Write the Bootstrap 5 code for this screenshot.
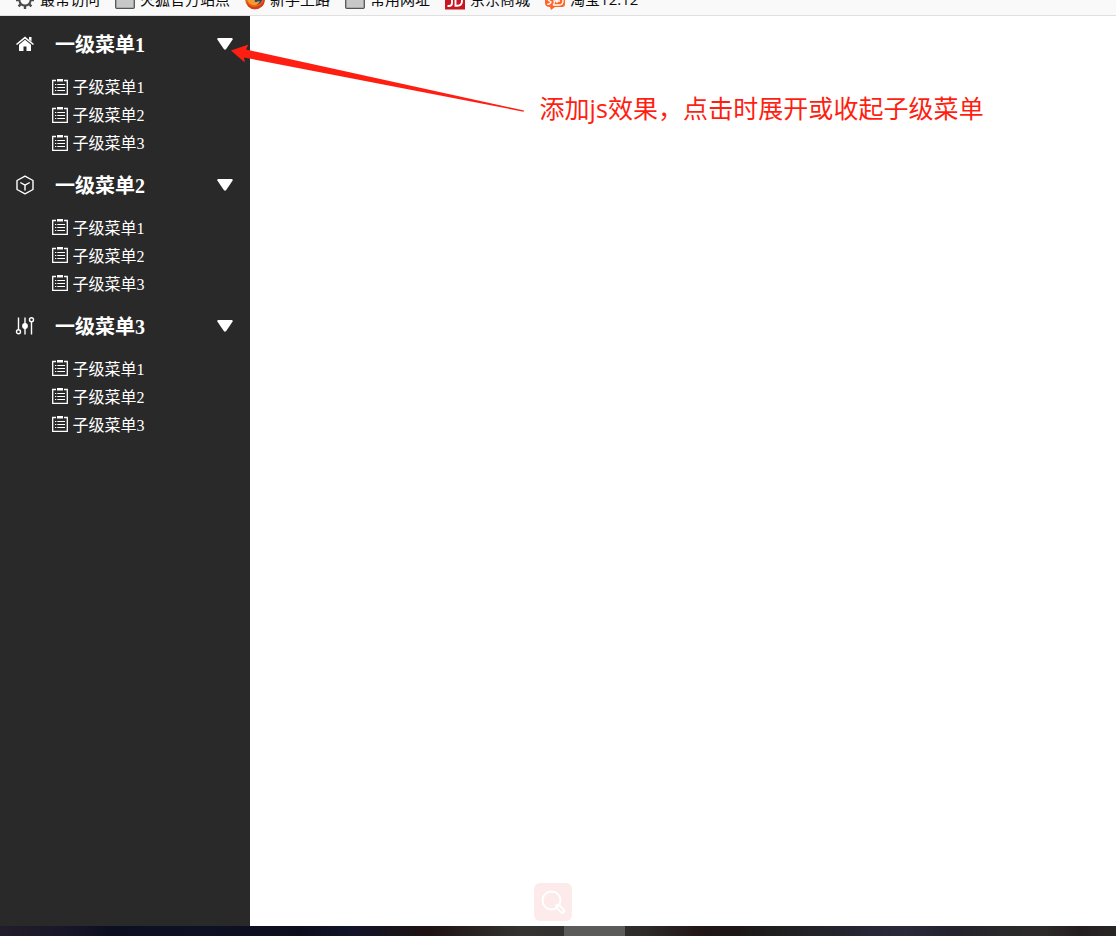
<!DOCTYPE html>
<html lang="zh-CN">
<head>
<meta charset="utf-8">
<meta name="viewport" content="width=device-width, initial-scale=1">
<title>侧边菜单</title>
<link href="https://cdn.jsdelivr.net/npm/bootstrap@5.3.0/dist/css/bootstrap.min.css" rel="stylesheet">
<style>
body{background:#fff;font-family:"Liberation Serif","Noto Sans CJK SC",serif}
.bookmarks{height:16px;background:#f9f9fa;border-bottom:1px solid #e0e0e1;padding-left:15px;gap:15px;font:15px/20px "Open Sans","Noto Sans CJK SC",sans-serif;color:#0c0c0d}
.bookmarks a{gap:5px;height:20px;margin-top:-10px;color:inherit}
.bookmarks span{margin-top:-1px}
.bookmarks svg{width:20px;height:20px;flex:none}
.sidebar{width:250px;background:#292929;color:#fff}
.menu-head{height:56.7px;padding:0 17px 0 15px;font-size:20px;line-height:30px}
.menu-head h2{font-size:20px;line-height:30px;margin-left:20px;padding-top:2px}
.submenu a{height:28px;padding-left:52px;gap:4.5px;font-size:16px;line-height:24px;color:#fff}
.submenu span{padding-top:3px}
.arrow{left:230px;top:42px}
.tip{left:539.5px;top:90px;font:25px/36px "Open Sans","Noto Sans CJK SC",sans-serif;letter-spacing:.05px;color:#ff1f12}
.finder{left:534px;bottom:15px;width:38px;height:38px;border-radius:6px;background:#fdeaea}
.taskbar{height:10px;background:linear-gradient(90deg,#231d2a 0,#171629 70px,#0c0f20 110px,#0e1124 200px,#0c0d1c 300px,#11132a 350px,#18131c 390px,#1f1213 430px,#2a2422 480px,#343330 520px,#2e2c2b 640px,#221616 700px,#1d1516 735px,#1f1f20 780px,#252532 850px,#292939 905px,#23222e 950px,#292829 1010px,#2c2929 1045px,#231d1f 1080px,#292424 1116px)}
.task-active{width:61px;margin-left:564px;background:#5b5b5a}
</style>
</head>
<body class="vh-100 d-flex flex-column overflow-hidden">
<svg class="d-none">
  <symbol id="clip" viewBox="0 0 16 16"><path d="M4 1.500H.7v13.800h14.600V1.500H12" fill="none" stroke="#fff" stroke-width="1.300"/><path d="M5 0h6v2.500H5z" fill="#fff"/><path d="M3 5.500h1.300M5.300 5.500H13M3 8.500h1.300M5.300 8.500H13M3 11.500h1.300M5.300 11.500H13" stroke="#fff" stroke-width="1.200"/></symbol>
  <symbol id="caret" viewBox="0 0 16 12"><path d="M1.300 0h13.400q1.500.2.8 1.700L9.200 11q-1.200 1.300-2.400 0L.5 1.700Q-.2.2 1.300 0z" fill="#fff"/></symbol>
</svg>

<nav class="bookmarks d-flex flex-shrink-0 overflow-hidden text-nowrap">
  <a class="d-flex text-decoration-none" href="#"><svg viewBox="0 0 20 20"><circle cx="10" cy="10" r="5.600" fill="none" stroke="#4a4a4a" stroke-width="2"/><path d="M10 1v3M10 16v3M1 10h3M16 10h3M3.600 3.600l2.200 2.200M14.200 14.200l2.200 2.200M3.600 16.400l2.200-2.200M14.200 5.800l2.200-2.200" stroke="#4a4a4a" stroke-width="2.400"/></svg><span>最常访问</span></a>
  <a class="d-flex text-decoration-none" href="#"><svg viewBox="0 0 20 20"><rect x=".7" y="4" width="18.600" height="14.300" rx="1" fill="#c8c8c8" stroke="#555" stroke-width="1.300"/></svg><span>火狐官方站点</span></a>
  <a class="d-flex text-decoration-none" href="#"><svg viewBox="0 0 20 20"><circle cx="10" cy="9.500" r="9.800" fill="#e5601d"/><path d="M1 11Q4 17 10 17q8-1 9-9l.8 1Q20 18 10 19.300 3 19 1 11" fill="#d63b18"/><circle cx="11" cy="8.500" r="6.200" fill="#22476f"/><path d="M2 9q4-3 8 1-1 2 1 2l4-1q-2 5-7 4-5-1-6-6" fill="#f49a2b"/></svg><span>新手上路</span></a>
  <a class="d-flex text-decoration-none" href="#"><svg viewBox="0 0 20 20"><rect x=".7" y="4" width="18.600" height="14.300" rx="1" fill="#c8c8c8" stroke="#555" stroke-width="1.300"/></svg><span>常用网址</span></a>
  <a class="d-flex text-decoration-none" href="#"><svg viewBox="0 0 20 20"><path d="M0 0h20v19.500H0z" fill="#c81623"/><path d="M7 5v8q0 3-3 3H2.500M10.500 6v9.700h2q4.500 0 4.500-5t-4.500-5z" fill="none" stroke="#fff" stroke-width="1.900"/></svg><span>京东商城</span></a>
  <a class="d-flex text-decoration-none" href="#"><svg viewBox="0 0 20 20"><path d="M1 0h18q1 0 1 2v12q0 3-3 3h-7l-4 3-1-3Q0 17 0 13V0z" fill="#ff6428"/><path d="M2 14q3 1 4-2l-3-2M8 8h8q2 0 2 3 0 4-4 4H8q2-1 1-5M12 9v4M10 11h5" fill="none" stroke="#fff" stroke-width="1.300"/></svg><span>淘宝12.12</span></a>
</nav>

<div class="d-flex flex-grow-1">
  <aside class="sidebar">
    <section>
      <div class="menu-head d-flex align-items-center"><svg width="20" height="20" viewBox="0 0 20 20"><path d="M1.500 10.500L10 3.600l8.500 6.900" fill="none" stroke="#fff" stroke-width="1.600"/><path d="M14 3h2.500v4.500L14 5.500zM10 5.700l6 5V17h-4.500v-4.500h-3V17H4v-6.300z" fill="#fff"/></svg><h2 class="fw-bold mb-0">一级菜单1</h2><svg class="ms-auto" width="16" height="12"><use href="#caret"/></svg></div>
      <div class="submenu">
        <a href="#" class="d-flex align-items-center text-decoration-none"><svg width="16" height="16"><use href="#clip"/></svg><span>子级菜单1</span></a>
        <a href="#" class="d-flex align-items-center text-decoration-none"><svg width="16" height="16"><use href="#clip"/></svg><span>子级菜单2</span></a>
        <a href="#" class="d-flex align-items-center text-decoration-none"><svg width="16" height="16"><use href="#clip"/></svg><span>子级菜单3</span></a>
      </div>
    </section>
    <section>
      <div class="menu-head d-flex align-items-center"><svg width="20" height="20" viewBox="0 0 20 20" fill="none" stroke="#fff" stroke-width="1.400"><path d="M10 1.200l8 4.300v9l-8 4.300-8-4.300v-9zM5.300 7.500L10 10.200l4.700-2.700M10 10.200V15.500" stroke-linejoin="round"/></svg><h2 class="fw-bold mb-0">一级菜单2</h2><svg class="ms-auto" width="16" height="12"><use href="#caret"/></svg></div>
      <div class="submenu">
        <a href="#" class="d-flex align-items-center text-decoration-none"><svg width="16" height="16"><use href="#clip"/></svg><span>子级菜单1</span></a>
        <a href="#" class="d-flex align-items-center text-decoration-none"><svg width="16" height="16"><use href="#clip"/></svg><span>子级菜单2</span></a>
        <a href="#" class="d-flex align-items-center text-decoration-none"><svg width="16" height="16"><use href="#clip"/></svg><span>子级菜单3</span></a>
      </div>
    </section>
    <section>
      <div class="menu-head d-flex align-items-center"><svg width="20" height="20" viewBox="0 0 20 20" fill="none" stroke="#fff" stroke-width="1.400"><path d="M3.500 1.500v12M10 1.500v17M16.500 6v12.500"/><circle cx="3.500" cy="15.800" r="2"/><circle cx="10" cy="10" r="2.200" fill="#fff"/><circle cx="16.500" cy="3.800" r="2"/></svg><h2 class="fw-bold mb-0">一级菜单3</h2><svg class="ms-auto" width="16" height="12"><use href="#caret"/></svg></div>
      <div class="submenu">
        <a href="#" class="d-flex align-items-center text-decoration-none"><svg width="16" height="16"><use href="#clip"/></svg><span>子级菜单1</span></a>
        <a href="#" class="d-flex align-items-center text-decoration-none"><svg width="16" height="16"><use href="#clip"/></svg><span>子级菜单2</span></a>
        <a href="#" class="d-flex align-items-center text-decoration-none"><svg width="16" height="16"><use href="#clip"/></svg><span>子级菜单3</span></a>
      </div>
    </section>
  </aside>
  <main class="flex-grow-1"></main>
</div>

<footer class="taskbar d-flex flex-shrink-0"><div class="task-active"></div></footer>

<svg class="arrow position-absolute" width="296" height="72" viewBox="230 42 296 72"><path d="M231 50.500L248.500 44.500 246 49.500 524 110.500 523.500 111.700 244 57.500 244.800 62.500z" fill="#ff1f12"/></svg>
<div class="tip position-absolute text-nowrap">添加js效果，点击时展开或收起子级菜单</div>
<div class="finder position-absolute"><svg class="d-block" width="38" height="38" fill="none" stroke="#fff"><circle cx="17.500" cy="17.500" r="9" stroke-width="2"/><path d="M24 23.500l4.500 4.500" stroke-width="5.500" stroke-linecap="round"/><path d="M25 24.500l3 3" stroke="#fdeaea" stroke-width="1.800" stroke-linecap="round"/></svg></div>
<script src="https://cdn.jsdelivr.net/npm/bootstrap@5.3.0/dist/js/bootstrap.bundle.min.js"></script>
</body>
</html>
